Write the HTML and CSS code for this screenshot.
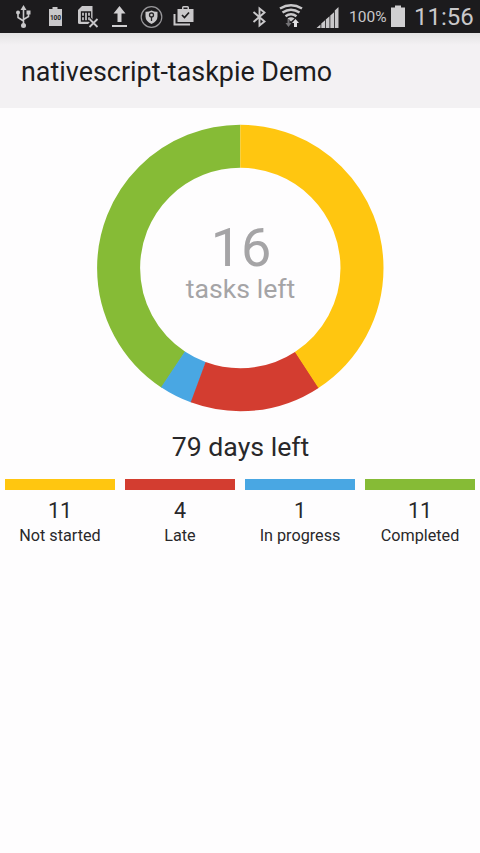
FILE: index.html
```
<!DOCTYPE html>
<html lang="en">
<head>
<meta charset="utf-8">
<title>nativescript-taskpie Demo</title>
<link rel="stylesheet" href="styles.css">
</head>
<body>
<header class="status">
  <div class="icons">
    <svg width="40" height="33" viewBox="0 0 40 33"><g fill="none" stroke="#c9c8ca" stroke-width="1.6"><path d="M23.500 8v16M18 13v4.500l5.500 3.500M28.500 13v3.500l-5 3"/></g><g fill="#c9c8ca"><path d="M23.500 5l3 5h-6z"/><circle cx="23.500" cy="25.500" r="2.500"/><circle cx="18" cy="12.500" r="2"/><path d="M26.500 10.500h4v4h-4z"/></g></svg>
    <svg width="32" height="33" viewBox="40 0 32 33"><path fill="#c9c8ca" d="M49 9h3.500V7h5v2H62v17H49z"/><text class="tiny" x="55.500" y="20" text-anchor="middle">100</text></svg>
    <svg width="32" height="33" viewBox="72 0 32 33"><path fill="#c9c8ca" d="M82 6h10.500v13.500L88 24h-8.500q-1.500 0-1.500-1.500V10z"/><path fill="none" stroke="#1c1b1d" stroke-width="1.300" d="M81.500 12h9v9h-9zM84.500 12v9M87.500 12v9M81.500 16.500h3M87.500 16.500h3"/><path stroke="#1c1b1d" stroke-width="4" d="M89.500 19l8 8M97.500 19l-8 8"/><path stroke="#c9c8ca" stroke-width="1.800" d="M89.500 19l8 8M97.500 19l-8 8"/></svg>
    <svg width="32" height="33" viewBox="104 0 32 33"><path fill="#d0cfd1" d="M119.500 6l6 7.500h-4V22h-4v-8.500h-4zM112 25h15v2h-15z"/></svg>
    <svg width="32" height="33" viewBox="136 0 32 33"><circle cx="151.500" cy="17" r="10.300" fill="none" stroke="#98979a" stroke-width="1.200"/><path fill="#c9c8ca" d="M151.500 10.500q3 1.500 6 1.300v4.700q0 4.500-6 7.500-6-3-6-7.500v-4.700q3 .2 6-1.300z"/><g fill="none" stroke="#29282a" stroke-width="1.300"><circle cx="151.500" cy="15" r="2"/><path d="M151.500 17v4"/></g></svg>
    <svg width="32" height="33" viewBox="168 0 32 33"><path fill="#c9c8ca" d="M177.500 9h4.500V7.500q0-1.500 1.500-1.500h4q1.500 0 1.500 1.500V9h4.500v13h-16zM183.500 9h4V7.500h-4z" fill-rule="evenodd"/><path fill="none" stroke="#c9c8ca" stroke-width="2" d="M174.500 14v10.500H190"/><path fill="none" stroke="#1c1b1d" stroke-width="1.700" d="M182 15l2.500 2.500 4.500-5"/></svg>
  </div>
  <div class="icons">
    <svg width="32" height="33" viewBox="244 0 32 33"><path fill="none" stroke="#c9c8ca" stroke-width="1.900" d="M253.500 12l11 9.500-5 4V8.500l5 4-11 9.500"/></svg>
    <svg width="35" height="33" viewBox="276 0 35 33"><g fill="none" stroke="#c9c8ca" stroke-width="2.500"><path d="M280 8.500q11-6.500 22 0M282.500 12.500q8.500-5.500 17 0M285.500 16.300q5.500-4 11 0"/></g><path fill="#c9c8ca" d="M287.500 18.500q3.500-2.500 7 0l-3.500 3z"/><path fill="#747376" d="M287.500 19h2v4h2l-3 4-3-4h2z"/><path fill="#e0dfe1" d="M295.500 19l3.500 4h-2v4h-3v-4h-2z"/></svg>
    <svg width="35" height="33" viewBox="311 0 35 33"><path fill="#c9c8ca" d="M316.500 28l4-3.600V28zM321.300 28v-4.500l3.700-3.200V28zM325.800 28v-8.500l3.700-3.200V28zM330.300 28V15.500l3.700-3.200V28zM334.800 28V10.500l3.700-3.500V28z"/></svg>
    <span class="pct">100%</span>
    <svg width="28" height="33" viewBox="386 0 28 33"><path fill="#d0cfd1" d="M391 7.500h4V5.500h6v2h4V27h-14z"/></svg>
    <span class="clock">11:56</span>
  </div>
</header>
<h1 class="title">nativescript-taskpie Demo</h1>
<main>
  <div class="pie">
    <svg class="ring" width="288" height="288" viewBox="-144 -144 288 288">
      <g fill="none" stroke-width="43" transform="translate(.3 0) rotate(-90)">
        <circle r="121.700" stroke="#86bb36" pathLength="27" stroke-dasharray="11 16" stroke-dashoffset="-16"/>
        <circle r="121.700" stroke="#49a7e3" pathLength="27" stroke-dasharray="1.020 25.980" stroke-dashoffset="-15"/>
        <circle r="121.700" stroke="#d33d30" pathLength="27" stroke-dasharray="4.020 22.980" stroke-dashoffset="-11"/>
        <circle r="121.700" stroke="#ffc610" pathLength="27" stroke-dasharray="11.020 15.980"/>
      </g>
    </svg>
    <div class="center"><div class="count">16</div><div class="caption">tasks left</div></div>
  </div>
  <div class="days">79 days left</div>
  <div class="legend">
    <div class="item"><div class="bar yellow"></div><div class="num">11</div><div class="label">Not started</div></div>
    <div class="item"><div class="bar red"></div><div class="num">4</div><div class="label">Late</div></div>
    <div class="item"><div class="bar blue"></div><div class="num">1</div><div class="label">In progress</div></div>
    <div class="item"><div class="bar green"></div><div class="num">11</div><div class="label">Completed</div></div>
  </div>
</main>
</body>
</html>
```
FILE: styles.css
```
body { margin: 0; height: 853px; overflow: hidden; background: #fefdfe; color: #29282a; font-family: Roboto, sans-serif; }
.status { display: flex; justify-content: space-between; height: 33px; background: #1c1b1d; color: #c9c8ca; }
.icons { display: flex; }
.icons svg { flex: none; display: block; }
.tiny { font: bold 6.5px Roboto, sans-serif; fill: #1c1b1d; }
.pct { width: 40px; padding-left: 3px; box-sizing: border-box; font-size: 15.5px; line-height: 35px; white-space: nowrap; }
.clock { width: 66px; box-sizing: border-box; font-size: 24px; line-height: 34px; white-space: nowrap; }
.title { margin: 0; height: 75px; padding-left: 21px; box-sizing: border-box; font-size: 26.9px; font-weight: 400; line-height: 78px; background: linear-gradient(#e3e2e3, #f3f1f3 12px); color: #1d1c1e; }
.pie { display: grid; width: 288px; margin: 16px auto 0; place-items: center; }
.ring, .center { grid-area: 1 / 1; }
.ring { display: block; }
.center { text-align: center; color: #a5a4a6; padding-bottom: 7px; }
.count { padding-left: 2px; font-size: 54px; line-height: 48px; }
.caption { padding-left: 1px; font-size: 26.7px; line-height: 34px; }
.days { margin-top: 17px; padding-left: 1px; text-align: center; font-size: 26.7px; line-height: 36px; }
.legend { display: grid; grid-template-columns: repeat(4, 1fr); margin-top: 14px; }
.item { text-align: center; }
.bar { height: 11px; margin: 0 5px; }
.yellow { background: #ffc610; }
.red { background: #d33d30; }
.blue { background: #49a7e3; }
.green { background: #86bb36; }
.num { margin-top: 8px; font-size: 21.5px; line-height: 26px; }
.label { font-size: 16.2px; line-height: 24px; }
```
